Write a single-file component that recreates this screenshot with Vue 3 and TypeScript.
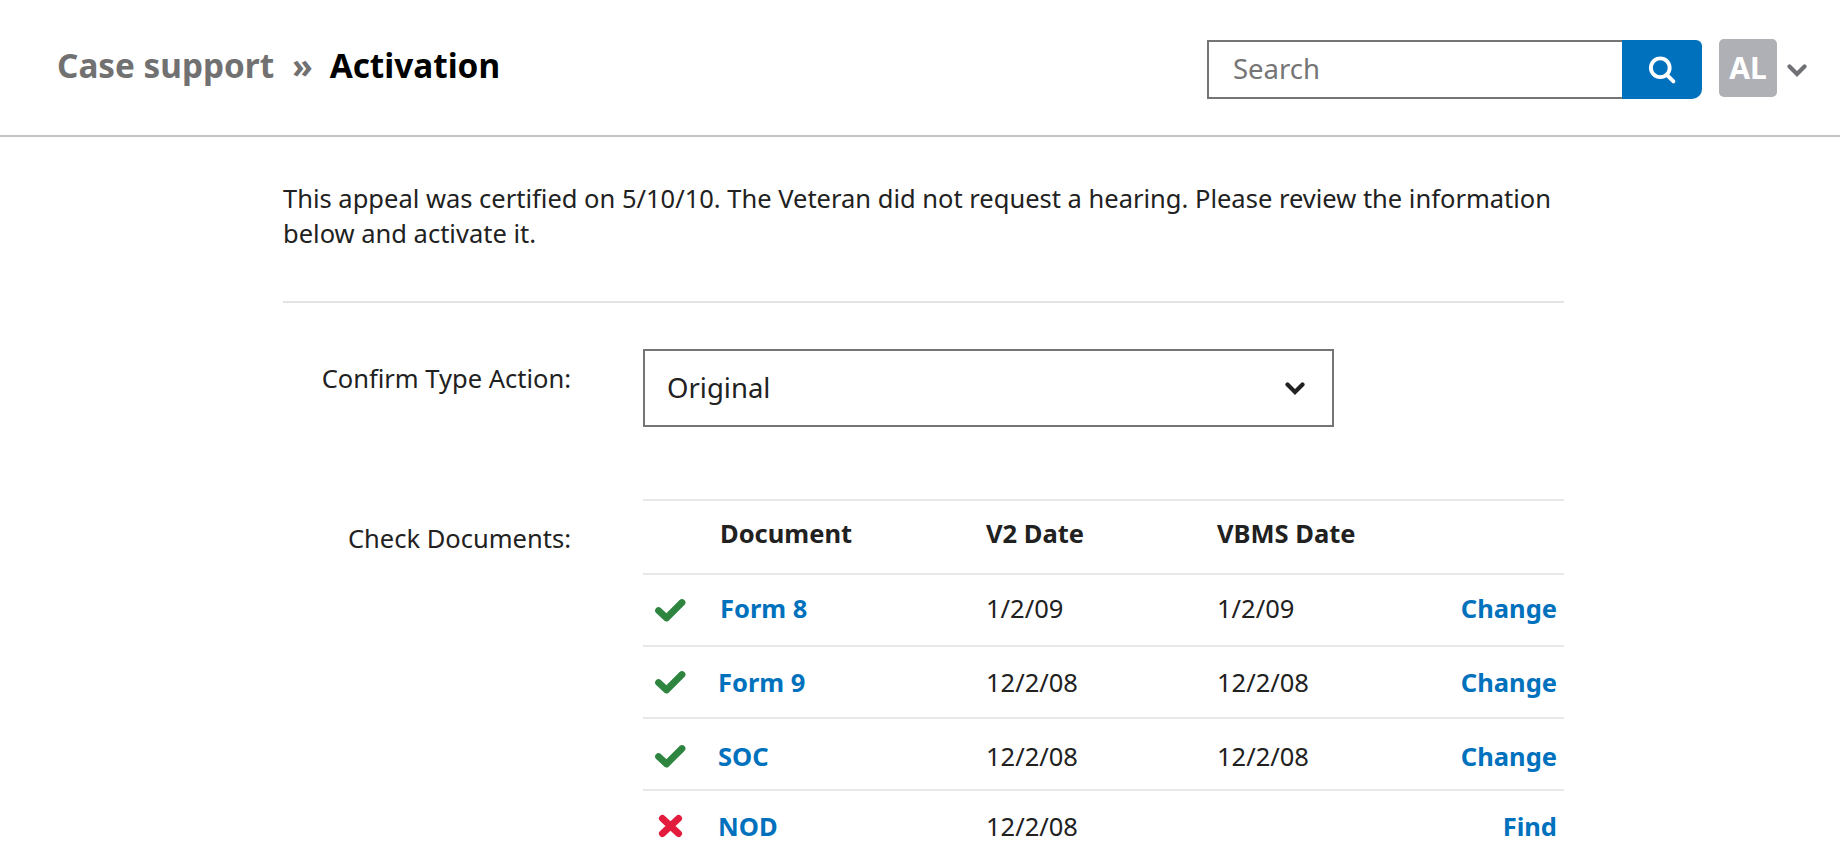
<script setup lang="ts">
interface Row {
  name: string
  v2: string
  vbms: string
  action: string
  ok: boolean
  shift: boolean
}
const rows: Row[] = [
  { name: 'Form 8', v2: '1/2/09', vbms: '1/2/09', action: 'Change', ok: true, shift: false },
  { name: 'Form 9', v2: '12/2/08', vbms: '12/2/08', action: 'Change', ok: true, shift: true },
  { name: 'SOC', v2: '12/2/08', vbms: '12/2/08', action: 'Change', ok: true, shift: true },
  { name: 'NOD', v2: '12/2/08', vbms: '', action: 'Find', ok: false, shift: true },
]
</script>

<template>
  <div class="page">
    <header class="top">
      <div class="crumbs">
        <span class="crumb-parent">Case support</span>
        <span class="crumb-sep">»</span>
        <span class="crumb-current">Activation</span>
      </div>
      <div class="tools">
        <div class="search">
          <div class="search-input">Search</div>
          <div class="search-btn">
            <svg width="32" height="32" viewBox="0 0 28 28" fill="none" stroke="#fff" stroke-width="3.4" stroke-linecap="round">
              <circle cx="12.5" cy="12" r="8.2" />
              <path d="M18.5 18.5 L24 24" />
            </svg>
          </div>
        </div>
        <div class="avatar">AL</div>
        <svg class="avatar-chev" width="20" height="14" viewBox="0 0 20 14" fill="none" stroke="#6f7174" stroke-width="4.2" stroke-linecap="round">
          <path d="M2.5 3.5 L10 11 L17.5 3.5" />
        </svg>
      </div>
    </header>

    <main class="content">
      <p class="intro">This appeal was certified on 5/10/10. The Veteran did not request a hearing. Please review the information below and activate it.</p>
      <hr class="rule" />

      <div class="field type-field">
        <div class="label">Confirm Type Action:</div>
        <div class="select">
          <span>Original</span>
          <svg width="20" height="14" viewBox="0 0 20 14" fill="none" stroke="#212121" stroke-width="4.2" stroke-linecap="round">
            <path d="M2.5 3.5 L10 11 L17.5 3.5" />
          </svg>
        </div>
      </div>

      <div class="field docs-field">
        <div class="label docs-label">Check Documents:</div>
        <div class="table">
          <div class="row head">
            <div></div>
            <div>Document</div>
            <div>V2 Date</div>
            <div>VBMS Date</div>
            <div></div>
          </div>
          <div v-for="r in rows" :key="r.name" class="row">
            <div class="icon-cell">
              <svg v-if="r.ok" width="32" height="24" viewBox="0 0 32 24">
                <path d="M4.5 12.5 L12.5 20 L28 4.5" fill="none" stroke="#2e8540" stroke-width="6.8" stroke-linecap="round" stroke-linejoin="round" />
              </svg>
              <svg v-else width="32" height="24" viewBox="0 0 32 24">
                <path d="M8.5 4.5 L24.5 19.5 M24.5 4.5 L8.5 19.5" fill="none" stroke="#e31c3d" stroke-width="7" stroke-linecap="round" />
              </svg>
            </div>
            <div class="doc" :class="{ shifted: r.shift }">{{ r.name }}</div>
            <div>{{ r.v2 }}</div>
            <div>{{ r.vbms }}</div>
            <div class="action">{{ r.action }}</div>
          </div>
        </div>
      </div>
    </main>
  </div>
</template>

<style>
html, body {
  margin: 0;
  background: #fff;
  overflow: hidden;
}
</style>

<style scoped>
.page {
  width: 1840px;
  height: 858px;
  overflow: hidden;
  font-family: "Noto Sans", "Open Sans", sans-serif;
  color: #212121;
  font-size: 25.5px;
}
.top {
  height: 135px;
  border-bottom: 2px solid #c4c4c4;
  display: flex;
  justify-content: space-between;
  align-items: flex-start;
  padding: 0 33px 0 57px;
}
.crumbs {
  display: flex;
  align-items: baseline;
  gap: 18px;
  padding-top: 43px;
  font-size: 33.3px;
  font-weight: 700;
  line-height: 45px;
}
.crumb-parent, .crumb-sep { color: #717171; }
.crumb-sep { margin-right: -1px; }
.crumb-current { color: #000; }
.tools {
  display: flex;
  align-items: flex-start;
  padding-top: 39px;
}
.search {
  display: flex;
  width: 495px;
  height: 59px;
  margin-top: 1px;
}
.search-input {
  flex: 1;
  box-sizing: border-box;
  border: 2px solid #757575;
  border-right: 0;
  padding-left: 24px;
  line-height: 53px;
  font-size: 27.5px;
  color: #757575;
  height: 59px;
}
.search-btn {
  width: 80px;
  background: #0071bc;
  border-radius: 0 6px 10px 0;
  display: flex;
  align-items: center;
  justify-content: center;
}
.avatar {
  width: 58px;
  height: 58px;
  margin-left: 17px;
  background: #aeb0b5;
  border-radius: 5px;
  color: #fff;
  font-weight: 700;
  font-size: 30px;
  line-height: 58px;
  text-align: center;
}
.avatar-chev { margin: 24px 0 0 10px; }
.content {
  width: 1281px;
  margin-left: 283px;
}
.intro {
  margin: 0;
  padding-top: 44px;
  line-height: 35px;
}
.rule {
  border: 0;
  border-top: 2px solid #e4e4e4;
  margin: 50px 0 0;
}
.field {
  display: flex;
  align-items: flex-start;
}
.type-field { margin-top: 46px; }
.docs-field { margin-top: 72px; }
.label {
  width: 288px;
  flex: none;
  text-align: right;
  line-height: 36px;
  padding-top: 11px;
}
.docs-label { padding-top: 21px; }
.select {
  box-sizing: border-box;
  width: 691px;
  height: 78px;
  margin-left: 72px;
  border: 2px solid #757575;
  padding: 0 27px 2px 22px;
  display: flex;
  align-items: center;
  justify-content: space-between;
  font-size: 27.5px;
}
.select svg { margin-top: 2px; }
.table {
  width: 921px;
  margin-left: 72px;
  border-top: 2px solid #e8e8e8;
}
.row {
  display: grid;
  grid-template-columns: 77px 266px 231px 1fr 120px;
  align-items: center;
  height: 70px;
  border-bottom: 2px solid #e8e8e8;
}
.row.head {
  height: 64px;
  padding-bottom: 8px;
  font-weight: 700;
}
.row:nth-child(2) > div:not(.icon-cell) { padding-bottom: 4px; }
.row:nth-child(4) > div { padding-top: 3px; }
.row:last-child { border-bottom: 0; }
.icon-cell {
  display: flex;
  padding-left: 11px;
}
.doc, .action {
  color: #0071bc;
  font-weight: 700;
}
.shifted { margin-left: -2px; }
.action {
  text-align: right;
  padding-right: 7px;
}
</style>
